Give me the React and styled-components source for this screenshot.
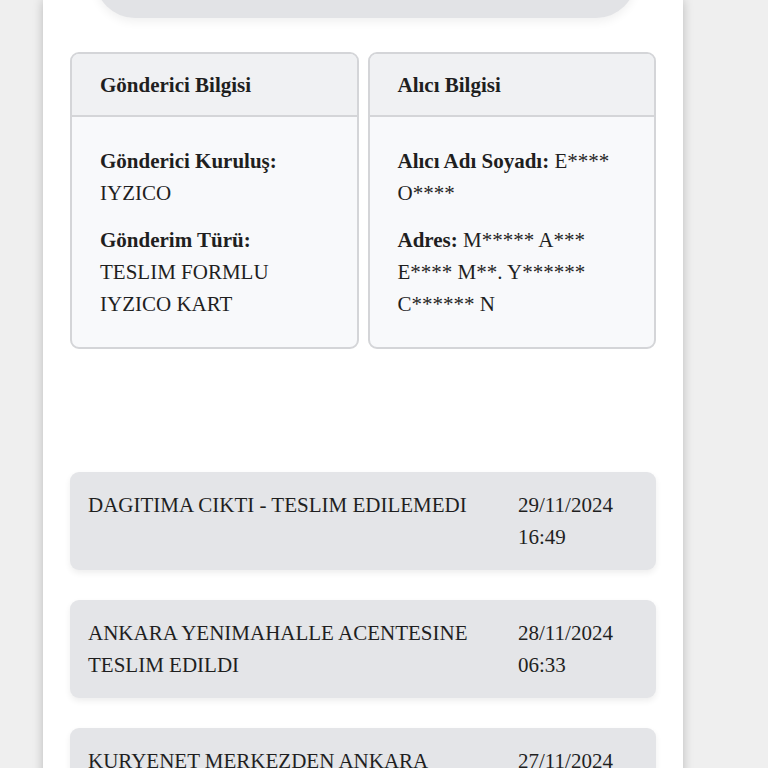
import React from "react";
import styled, { createGlobalStyle } from "styled-components";

const GlobalStyle = createGlobalStyle`
  html, body {
    margin: 0;
    padding: 0;
    background: #efefef;
  }
  body {
    font-family: "Liberation Serif", "Times New Roman", serif;
    color: #1f1f1f;
  }
`;

const Page = styled.div`
  padding-left: 43px;
  width: 640px;
`;

const Panel = styled.div`
  background: #fff;
  min-height: 768px;
  box-shadow: 0 0 10px rgba(0, 0, 0, 0.22);
  padding: 0 27px;
  overflow: hidden;
`;

const TopPill = styled.div`
  height: 80px;
  margin: -62px 20px 0 25px;
  background: #e2e3e6;
  border-radius: 0 0 40px 40px;
  box-shadow: 0 4px 10px rgba(0, 0, 0, 0.06);
`;

const CardRow = styled.div`
  display: grid;
  grid-template-columns: 1fr 1fr;
  gap: 9px;
  margin-top: 34px;
`;

const Card = styled.div`
  border: 2px solid #d4d5d8;
  border-radius: 9px;
  background: #f8f9fb;
  overflow: hidden;
`;

const CardHeader = styled.div`
  background: #f0f1f3;
  border-bottom: 2px solid #d4d5d8;
  padding: 15px 28px 14px;
  font-size: 21px;
  line-height: 32px;
  font-weight: bold;
`;

const CardBody = styled.div`
  padding: 28px 28px 27px;
  display: flex;
  flex-direction: column;
  gap: 15px;
`;

const Field = styled.div`
  font-size: 21px;
  line-height: 32px;
  b {
    font-weight: bold;
  }
`;

const Timeline = styled.div`
  display: flex;
  flex-direction: column;
  gap: 30px;
  margin-top: 123px;
  padding-bottom: 40px;
`;

const Event = styled.div`
  display: flex;
  gap: 18px;
  background: #e4e5e8;
  border-radius: 9px;
  padding: 17px 18px;
  box-shadow: 0 3px 6px rgba(0, 0, 0, 0.07);
  font-size: 21px;
  line-height: 32px;
`;

const EventText = styled.div`
  flex: 1;
`;

const EventDate = styled.div`
  width: 120px;
  flex-shrink: 0;
`;

const events = [
  { text: "DAGITIMA CIKTI - TESLIM EDILEMEDI", date: "29/11/2024", time: "16:49" },
  { text: "ANKARA YENIMAHALLE ACENTESINE TESLIM EDILDI", date: "28/11/2024", time: "06:33" },
  { text: "KURYENET MERKEZDEN ANKARA YENIMAHALLE ACENTESINE GÖNDERILDI", date: "27/11/2024", time: "21:10" },
];

export default function App() {
  return (
    <Page>
      <GlobalStyle />
      <Panel>
        <TopPill />
        <CardRow>
          <Card>
            <CardHeader>Gönderici Bilgisi</CardHeader>
            <CardBody>
              <Field>
                <b>Gönderici Kuruluş:</b>
                <br />
                IYZICO
              </Field>
              <Field>
                <b>Gönderim Türü:</b>
                <br />
                TESLIM FORMLU IYZICO KART
              </Field>
            </CardBody>
          </Card>
          <Card>
            <CardHeader>Alıcı Bilgisi</CardHeader>
            <CardBody>
              <Field>
                <b>Alıcı Adı Soyadı:</b> E**** O****
              </Field>
              <Field>
                <b>Adres:</b> M***** A*** E**** M**. Y****** C****** N
              </Field>
            </CardBody>
          </Card>
        </CardRow>
        <Timeline>
          {events.map((e) => (
            <Event key={e.date}>
              <EventText>{e.text}</EventText>
              <EventDate>
                {e.date}
                <br />
                {e.time}
              </EventDate>
            </Event>
          ))}
        </Timeline>
      </Panel>
    </Page>
  );
}
